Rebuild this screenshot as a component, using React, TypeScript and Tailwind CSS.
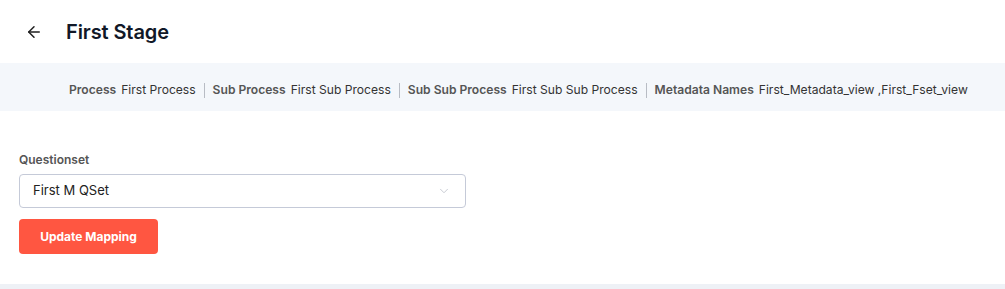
import { ArrowLeft, ChevronDown } from "lucide-react";

const meta = [
  { label: "Process", value: "First Process" },
  { label: "Sub Process", value: "First Sub Process" },
  { label: "Sub Sub Process", value: "First Sub Sub Process" },
  { label: "Metadata Names", value: "First_Metadata_view ,First_Fset_view" },
];

export default function App() {
  return (
    <div className="w-[1005px] h-[289px] bg-white font-['Inter',sans-serif] overflow-hidden">
      {/* Header */}
      <div className="h-[63px] flex items-center pl-[25px]">
        <button className="text-[#1f1f1f]">
          <ArrowLeft size={18} strokeWidth={2} />
        </button>
        <h1 className="ml-[23px] text-[20px] font-semibold text-[#111827] tracking-[-0.1px]">First Stage</h1>
      </div>

      {/* Meta bar */}
      <div className="h-[48px] bg-[#f4f7fb] flex items-center pt-[7px] pl-[69px] text-[12.1px]">
        {meta.map((m, i) => (
          <div key={m.label} className="flex items-center">
            {i > 0 && <span className="mx-[8px] w-px h-[15px] bg-[#b8bcc4]" />}
            <span className="font-semibold text-[#555]">{m.label}</span>
            <span className="ml-[5px] text-[#333]">{m.value}</span>
          </div>
        ))}
      </div>

      {/* Form */}
      <div className="h-[173px] px-[19px] pt-[41px]">
        <label className="block text-[12px] font-semibold text-[#555] leading-[16px]">Questionset</label>
        <div className="mt-[6px] w-[447px] h-[34px] border border-[#c5cad8] rounded-[4px] flex items-center justify-between pl-[13px] pr-[14px]">
          <span className="text-[13px] text-[#222]">First M QSet</span>
          <ChevronDown size={14} strokeWidth={1.5} className="text-[#c0c4cc]" />
        </div>
        <button className="mt-[11px] w-[139px] h-[35px] bg-[#ff5641] rounded-[4px] text-white text-[12px] font-bold">
          Update Mapping
        </button>
      </div>

      <div className="h-[5px] bg-[#eef1f6]" />
    </div>
  );
}
